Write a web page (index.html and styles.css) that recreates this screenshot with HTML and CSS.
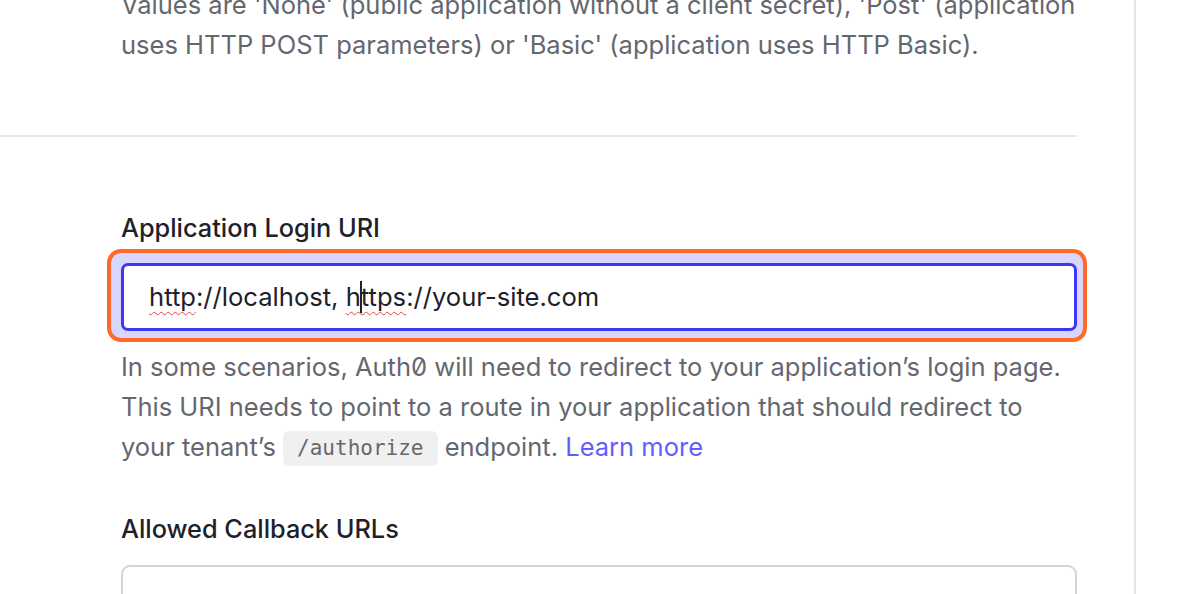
FILE: index.html
```html
<!DOCTYPE html>
<html lang="en">
<head>
<meta charset="utf-8">
<title>Application settings</title>
<link rel="stylesheet" href="styles.css">
</head>
<body>
<div class="page">
  <main class="main">
    <div class="content">
      <section class="section section-top">
        <p class="help">Values are 'None' (public application without a client secret), 'Post' (application uses HTTP POST parameters) or 'Basic' (application uses HTTP Basic).</p>
      </section>
      <section class="section section-uris">
        <div class="field">
          <label class="label">Application Login URI</label>
          <div class="focus-mark">
            <div class="input input-focused"><span class="spell">http</span>://localhost, <span class="spell">h<span class="caret"></span>ttps</span>://your-site.com</div>
          </div>
          <p class="help help-field">In some scenarios, Auth0 will need to redirect to your application’s login page. This URI needs to point to a route in your application that should redirect to your tenant’s <code class="code">/authorize</code> endpoint. <a class="link" href="#">Learn more</a></p>
        </div>
        <div class="field field-next">
          <label class="label">Allowed Callback URLs</label>
          <div class="input input-empty"></div>
        </div>
      </section>
    </div>
  </main>
  <aside class="side"></aside>
</div>
</body>
</html>
```

FILE: styles.css
```css
html, body {
  margin: 0;
  padding: 0;
  background: #ffffff;
  overflow: hidden;
}

body {
  font-family: Inter, "Noto Sans", "Liberation Sans", sans-serif;
  font-feature-settings: "zero" 1;
  color: #1e212a;
}

.page {
  display: flex;
  height: 594px;
}

.main {
  width: 1136px;
  flex: none;
  border-right: 2px solid #e6e6e9;
  box-sizing: border-box;
}

.side {
  flex: 1;
}

.content {
  width: 1077px;
  margin-top: -15px;
}

.section {
  padding-left: 121px;
}

.section-top {
  padding-bottom: 70px;
  border-bottom: 2px solid #e6e6e8;
}

.section-uris {
  padding-top: 76px;
}

.help {
  margin: 0;
  font-size: 25.5px;
  line-height: 40px;
  color: #65676e;
}

.label {
  display: block;
  font-size: 25.3px;
  font-weight: 500;
  line-height: 30px;
  color: #1e212a;
  margin-bottom: 20px;
}

.focus-mark {
  margin: -14px -10px -11px -14px;
  border: 4px solid #ff6a2b;
  border-radius: 14px;
  padding: 10px 6px 7px 10px;
  background: #d8d6ff;
}

.input {
  box-sizing: border-box;
  background: #ffffff;
  border-radius: 7px;
}

.input-focused {
  height: 68px;
  border: 3px solid #3d36f5;
  padding-left: 25px;
  font-size: 25.6px;
  line-height: 62px;
  color: #1e212a;
  white-space: nowrap;
}

.spell {
  text-decoration: underline wavy #e0463a;
  text-decoration-thickness: 1px;
  text-underline-offset: 5px;
}

.caret {
  display: inline-block;
  width: 0;
  height: 32px;
  border-left: 2px solid #1e212a;
  vertical-align: -7px;
  margin-left: -1px;
  margin-right: -1px;
}

.help-field {
  margin-top: 16px;
}

.code {
  display: inline-block;
  font-family: "DejaVu Sans Mono", "Liberation Mono", monospace;
  font-size: 21px;
  line-height: 35px;
  color: #65676e;
  background: #f0f0f1;
  border-radius: 6px;
  padding: 0 14px;
  vertical-align: 1px;
}

.link {
  color: #635dff;
  text-decoration: none;
}

.field-next {
  margin-top: 47px;
}

.field-next .label {
  margin-bottom: 21px;
}

.input-empty {
  height: 68px;
  border: 2px solid #d4d4d9;
  border-radius: 9px;
}
```
